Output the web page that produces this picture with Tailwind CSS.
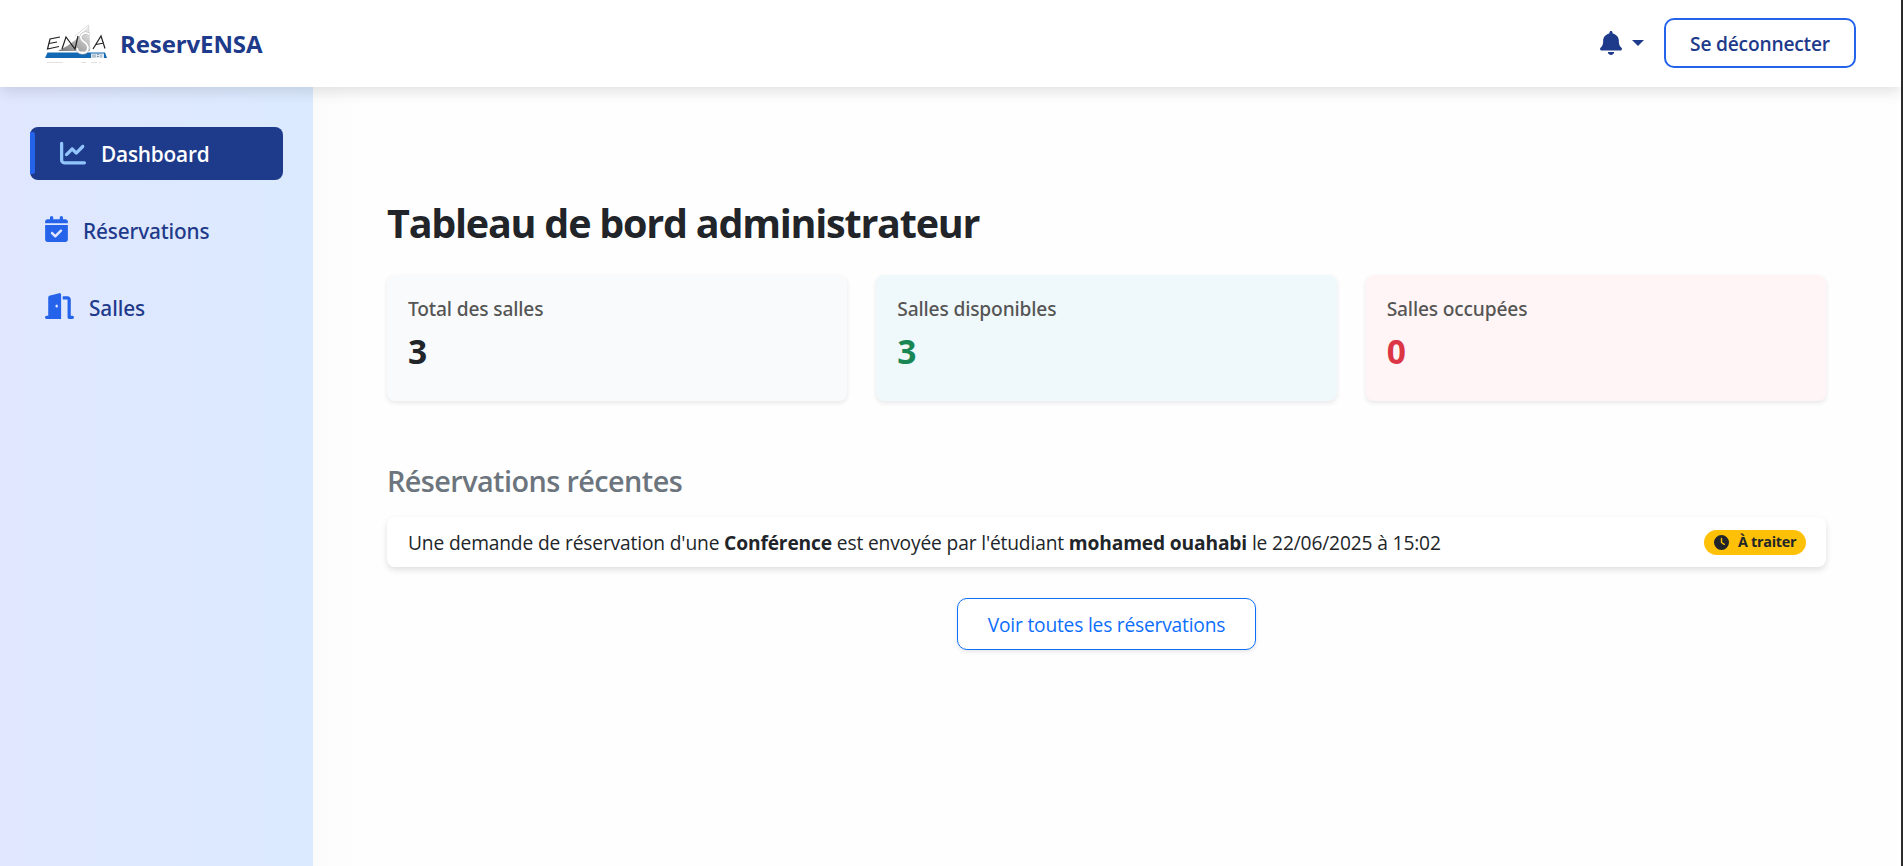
<!DOCTYPE html>
<html lang="fr">
<head>
<meta charset="utf-8">
<title>ReservENSA</title>
<script src="https://cdn.jsdelivr.net/npm/@tailwindcss/browser@4"></script>
</head>
<body class="h-[866px] overflow-hidden border-r-2 border-[#2b2b2b] bg-white font-['Open_Sans','Noto_Sans',sans-serif] text-[#212529] flex flex-col">
<header class="relative z-10 flex h-[87px] shrink-0 items-center justify-between bg-white pb-px pl-[45px] pr-[45px] shadow-[0_4px_14px_rgba(0,0,0,0.12)]">
  <div class="flex items-center pt-[2px]">
    <svg class="h-10 w-[63px]" viewBox="0 0 63 40" fill="none">
      <defs><linearGradient id="sail" x1="0" x2="1" y1="1" y2="0"><stop offset="0" stop-color="#777"/><stop offset="1" stop-color="#f4f4f4"/></linearGradient></defs>
      <path d="M13 27 Q32 18 43.500 2 L45 27Z" fill="url(#sail)"/>
      <path d="M30 12 43.500 1 45 26" stroke="#ccc" stroke-width=".7"/>
      <path d="M2.500 28.500 H60 L62 34 H0Z" fill="#1268b3"/>
      <path d="M15 13 5 15 2.500 25 14 22.500M4 19.500 12 18M17 25 21 13 30 25 33 12M48 25 56 12 60 24.500M51 20.500 59 19" stroke="#222" stroke-width="1.200"/>
      <path d="M44.500 10.500c-6-4-12 2-6.500 6.500 8 5 5 12-.5 12-4 0-6-3-5-5" stroke="#b5b5b5" stroke-width="2.800"/>
      <path d="M44.500 10.500c-6-4-12 2-6.500 6.500 8 5 5 12-.5 12-4 0-6-3-5-5" stroke="#fff" stroke-width="1.800"/>
      <path d="M46 29.500h13v4.500H46z" fill="#dfeaf2"/>
      <path d="M48 30.500v3m2-3v3m2-3h2m-2 2h2m2-2v3" stroke="#6d8494" stroke-width=".8"/>
      <path d="M2 38.500h16M36 38.500h5m5 0h6m2 0h2" stroke="#ccc" stroke-width=".6"/>
    </svg>
    <span class="ml-[12px] text-[24px] font-bold leading-9 tracking-[-0.1px] text-[#1e3a8a]">ReservENSA</span>
  </div>
  <div class="flex items-center">
    <svg class="h-6 w-[22px]" viewBox="0 0 448 512" preserveAspectRatio="none" fill="#1e3a8a"><path d="M224 0c-17.700 0-32 14.300-32 32v19.200C119 66 64 130.600 64 208v18.800c0 47-17.300 92.400-48.500 127.600l-7.400 8.300c-8.400 9.400-10.400 22.900-5.300 34.400S19.400 416 32 416h384c12.600 0 24-7.400 29.200-18.900s3.100-25-5.300-34.400l-7.400-8.300C401.300 319.200 384 273.900 384 226.800V208c0-77.400-55-142-128-156.800V32c0-17.700-14.300-32-32-32zm45.300 493.300c12-12 18.700-28.300 18.700-45.300H160c0 17 6.700 33.300 18.700 45.300S207 512 224 512s33.300-6.700 45.300-18.700z"/></svg>
    <svg class="ml-[10px] h-[6px] w-[12px]" viewBox="0 0 12 6" fill="#1e3a8a"><path d="M0 0h12L6 6z"/></svg>
    <button class="ml-5 flex h-[50px] w-[192px] items-center justify-center rounded-[10px] border-2 border-[#2563eb] pt-[2px] text-[19.2px] font-semibold tracking-[-0.2px] text-[#1e3a8a]">Se déconnecter</button>
  </div>
</header>
<div class="flex flex-1">
  <nav class="flex w-[313px] shrink-0 flex-col gap-6 bg-linear-to-r from-[#e0e7ff] to-[#dbeafe] px-[30px] pt-10 text-[20.8px] font-semibold text-[#1e3a8a]">
    <a class="relative flex h-[53px] items-center rounded-[8px] bg-[#1e3a8a] pl-[30px] text-white">
      <span class="absolute left-0 top-[5px] h-[42px] w-[5px] rounded-r-[2px] bg-[#2563eb]"></span>
      <svg class="mb-[2px] h-[26px] w-[26px]" viewBox="0 0 512 512" fill="#93c5fd"><path d="M64 64c0-17.700-14.300-32-32-32S0 46.300 0 64v336c0 44.200 35.800 80 80 80h400c17.700 0 32-14.300 32-32s-14.300-32-32-32H80c-8.800 0-16-7.200-16-16V64zm406.600 86.600c12.500-12.500 12.500-32.800 0-45.300s-32.800-12.500-45.300 0L320 210.700l-57.400-57.400c-12.500-12.500-32.800-12.500-45.300 0l-112 112c-12.500 12.500-12.500 32.800 0 45.300s32.800 12.500 45.300 0l89.400-89.300 57.400 57.400c12.500 12.500 32.800 12.500 45.300 0l128-128z"/></svg>
      <span class="ml-[15px] pt-[2px] tracking-[-0.2px]">Dashboard</span>
    </a>
    <a class="flex h-[53px] items-center pl-[15px]">
      <svg class="mb-[3px] h-[26px] w-[23px]" viewBox="0 0 448 512" fill="#2563eb"><path d="M128 0c17.700 0 32 14.300 32 32v32h128V32c0-17.700 14.300-32 32-32s32 14.300 32 32v32h48c26.500 0 48 21.500 48 48v32H0v-32c0-26.500 21.500-48 48-48h48V32c0-17.700 14.300-32 32-32zM0 176h448v288c0 26.500-21.500 48-48 48H48c-26.500 0-48-21.500-48-48V176zm329 129c9.400-9.400 9.400-24.600 0-33.900s-24.600-9.400-33.900 0l-95 95-47-47c-9.400-9.400-24.600-9.400-33.900 0s-9.400 24.600 0 33.900l64 64c9.400 9.400 24.600 9.400 33.900 0l112-112z"/></svg>
      <span class="ml-[15px] pt-[2px] font-['Noto_Sans'] font-medium tracking-[-0.15px]">Réservations</span>
    </a>
    <a class="flex h-[53px] items-center pl-[15px]">
      <svg class="mb-[3px] h-[26px] w-[29px]" viewBox="0 0 576 512" fill="#2563eb"><path fill-rule="evenodd" d="M320 32c0-9.900-4.500-19.200-12.300-25.200S289.800-1.400 280.200 1l-179.900 45C79 51.300 64 70.500 64 92.500V448H32c-17.700 0-32 14.300-32 32s14.300 32 32 32h288V32zM256 256c0 17.700-10.700 32-24 32s-24-14.300-24-32 10.700-32 24-32 24 14.300 24 32zm96-128h96v352c0 17.700 14.300 32 32 32h64c17.700 0 32-14.300 32-32s-14.300-32-32-32h-32V128c0-35.300-28.700-64-64-64h-96v64z"/></svg>
      <span class="ml-[15px] pt-[2px] font-['Noto_Sans'] font-medium tracking-[-0.1px]">Salles</span>
    </a>
  </nav>
  <main class="flex-1 bg-linear-to-r from-[#fbfbfb] from-0% via-[#fefefe] via-3% to-[#fefefe] pl-[74px] pr-[75px] pt-[106px]">
    <h1 class="h-[60px] text-[39.5px] font-bold leading-[60px] tracking-[-1.23px] whitespace-nowrap">Tableau de bord administrateur</h1>
    <section class="mt-[22px] grid grid-cols-3 gap-[29px]">
      <div class="h-[126px] rounded-[8px] bg-[#f8fafc] px-[21px] pt-[19px] shadow-[0_2px_5px_rgba(0,0,0,0.09)]">
        <p class="font-['Noto_Sans'] text-[19.2px] font-medium leading-[30px] tracking-[-0.16px] text-[#555]">Total des salles</p>
        <p class="mt-[5px] text-[33.6px] font-bold leading-[44px]">3</p>
      </div>
      <div class="h-[126px] rounded-[8px] bg-[#eff8fa] px-[21px] pt-[19px] shadow-[0_2px_5px_rgba(0,0,0,0.09)]">
        <p class="font-['Noto_Sans'] text-[19.2px] font-medium leading-[30px] tracking-[-0.16px] text-[#555]">Salles disponibles</p>
        <p class="mt-[5px] text-[33.6px] font-bold leading-[44px] text-[#198754]">3</p>
      </div>
      <div class="h-[126px] rounded-[8px] bg-[#fff5f6] px-[21px] pt-[19px] shadow-[0_2px_5px_rgba(0,0,0,0.09)]">
        <p class="font-['Noto_Sans'] text-[19.2px] font-medium leading-[30px] tracking-[-0.16px] text-[#555]">Salles occupées</p>
        <p class="mt-[5px] text-[33.6px] font-bold leading-[44px] text-[#dc3545]">0</p>
      </div>
    </section>
    <h2 class="mt-[60px] h-10 text-[28.8px] font-semibold leading-10 tracking-[-0.57px] text-[#6c757d]">Réservations récentes</h2>
    <div class="mt-[16px] flex h-[50px] items-center justify-between rounded-[8px] bg-white pl-[21px] pr-[20px] shadow-[0_3px_6px_rgba(0,0,0,0.12)]">
      <p class="whitespace-nowrap pt-[2px] text-[19.2px] tracking-[-0.15px]">Une demande de réservation d'une <b>Conférence</b> est envoyée par l'étudiant <b>mohamed ouahabi</b> le 22/06/2025 à 15:02</p>
      <span class="flex h-[25px] w-[102px] items-center rounded-full bg-[#ffc107] pl-[10px] text-[14.4px] font-bold">
        <svg class="h-[15px] w-[15px]" viewBox="0 0 512 512" fill="#212529"><path fill-rule="evenodd" d="M256 0a256 256 0 1 1 0 512A256 256 0 1 1 256 0zM232 120v136c0 8 4 15.500 10.700 20l96 64c11 7.400 25.900 4.400 33.300-6.700s4.400-25.900-6.700-33.300L280 243.200V120c0-13.300-10.700-24-24-24s-24 10.700-24 24z"/></svg>
        <span class="ml-[9px] tracking-[-0.3px] whitespace-nowrap">À traiter</span>
      </span>
    </div>
    <button class="mx-auto mt-[31px] flex h-[52px] w-[299px] items-center justify-center rounded-[10px] border border-[#0d6efd] bg-white pt-[2px] text-[19.2px] tracking-[-0.2px] text-[#0d6efd] shadow-[0_2px_4px_rgba(0,0,0,0.09)]">Voir toutes les réservations</button>
  </main>
</div>
</body>
</html>
